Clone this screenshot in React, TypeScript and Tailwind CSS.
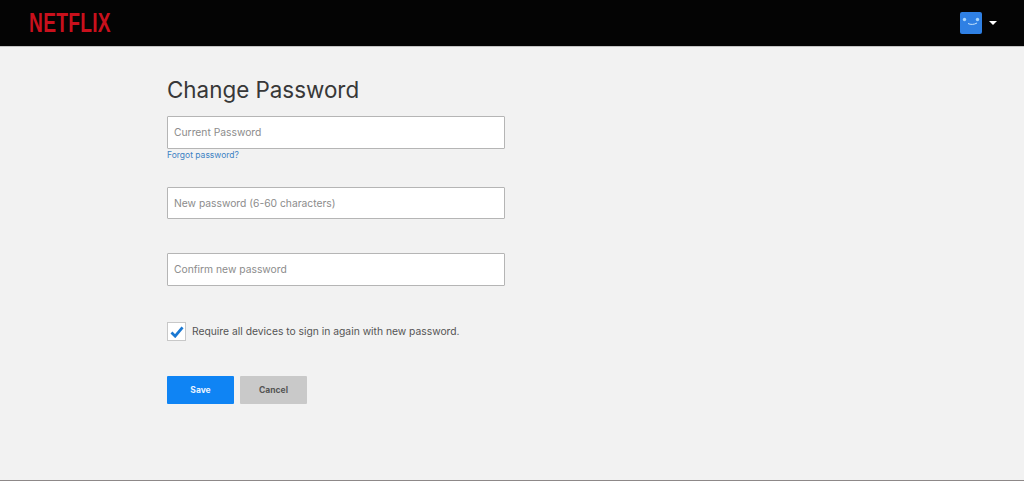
export default function App() {
  return (
    <div className="flex flex-col h-[481px] bg-[#f2f2f2] font-['Inter',sans-serif] overflow-hidden">
      {/* Header */}
      <header className="flex items-center justify-between h-[47px] shrink-0 bg-[#040404] border-b border-[#c4c4c4] pl-[29px] pr-[27px]">
        <div className="w-[82px] h-[26px]">
          <span className="block w-[82px] origin-top-left scale-x-[0.685] whitespace-nowrap font-['Liberation_Sans',sans-serif] font-bold text-[28px] leading-[26px] tracking-[0.4px] text-[#c9101c]">
            NETFLIX
          </span>
        </div>
        <div className="flex items-center gap-[7px]">
          <svg width="22" height="22" viewBox="0 0 22 22">
            <rect width="22" height="22" rx="2" fill="#2f80e4" />
            <circle cx="4.5" cy="7.5" r="1.7" fill="#a8d4fa" />
            <circle cx="17.5" cy="7.5" r="1.7" fill="#a8d4fa" />
            <path d="M8 11.5c2.5 1.3 6 1.3 9-0.5" stroke="#c5e2fb" strokeWidth="1" fill="none" />
          </svg>
          <span className="w-0 h-0 border-x-[4px] border-x-transparent border-t-[4px] border-t-white" />
        </div>
      </header>

      {/* Main Content */}
      <main className="flex flex-col items-start flex-1 pl-[167px] pt-[28px]">
        <h1 className="text-[22.4px] leading-[30px] text-[#383838] mb-[11px]">Change Password</h1>

        <Field placeholder="Current Password" />
        <a className="text-[8.5px] leading-[12px] text-[#3d82c4]">Forgot password?</a>

        <div className="mt-[26px]">
          <Field placeholder="New password (6-60 characters)" short />
        </div>
        <div className="mt-[34px]">
          <Field placeholder="Confirm new password" />
        </div>

        <label className="flex items-center gap-[6px] mt-[36px]">
          <span className="flex items-center justify-center w-[19px] h-[19px] bg-white border border-[#c8c8c8]">
            <svg width="14" height="12" viewBox="0 0 15 13">
              <path d="M1.5 7l4 4 8-9.5" stroke="#1a78d2" strokeWidth="3" fill="none" />
            </svg>
          </span>
          <span className="text-[10.3px] leading-[19px] text-[#555555]">
            Require all devices to sign in again with new password.
          </span>
        </label>

        <div className="flex gap-[6px] mt-[35px]">
          <button className="w-[67px] h-[28px] bg-[#0f84f4] rounded-[1px] text-[8.5px] font-bold text-[#e8f3ff]">
            Save
          </button>
          <button className="w-[67px] h-[28px] bg-[#c9c9c9] rounded-[1px] text-[8.5px] font-bold text-[#555555]">
            Cancel
          </button>
        </div>
      </main>

      {/* Footer edge */}
      <div className="h-[1px] shrink-0 bg-[#8d8888]" />
    </div>
  );
}

function Field({ placeholder, short }: { placeholder: string; short?: boolean }) {
  return (
    <div
      className={
        short
          ? "flex items-center w-[338px] h-[32px] bg-white border border-[#b5b5b5] rounded-[1px] px-[6px] pt-[1px]"
          : "flex items-center w-[338px] h-[33px] bg-white border border-[#b5b5b5] rounded-[1px] px-[6px] pt-[1px]"
      }
    >
      <span className="text-[10.3px] text-[#8c8c8c]">{placeholder}</span>
    </div>
  );
}
